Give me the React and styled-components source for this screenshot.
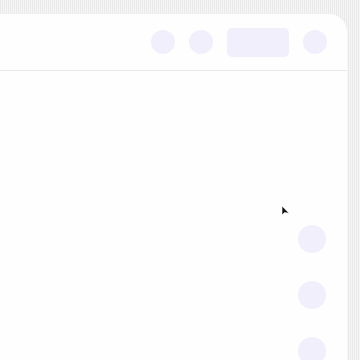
import React from "react";
import styled, { createGlobalStyle } from "styled-components";

const Global = createGlobalStyle`
  html, body {
    margin: 0;
    padding: 0;
    height: 360px;
    overflow: hidden;
    font-family: "Liberation Sans", Arial, sans-serif;
    background: repeating-linear-gradient(90deg, #e9e9e9 0px, #e9e9e9 1px, #f6f6f6 1px, #f6f6f6 2px);
  }
`;

const Page = styled.div`
  padding-top: 14px;
`;

const Panel = styled.div`
  width: 347px;
  height: 346px;
  background: #fefefe;
  border-top-right-radius: 18px;
  display: flex;
  flex-direction: column;
  overflow: hidden;
`;

const Header = styled.div`
  height: 56px;
  flex-shrink: 0;
  border-bottom: 1px solid #e8e8e8;
  display: flex;
  align-items: center;
  justify-content: flex-end;
  gap: 14px;
  padding-right: 20px;
`;

const Dot = styled.div`
  width: ${(p) => p.size}px;
  height: ${(p) => p.size}px;
  border-radius: 50%;
  background: #f1effc;
  flex-shrink: 0;
`;

const Pill = styled.div`
  width: 62px;
  height: 29px;
  border-radius: 5px;
  background: #f1effc;
`;

const Body = styled.div`
  position: relative;
  flex: 1;
  display: flex;
  flex-direction: column;
  align-items: flex-end;
  padding: 154px 21px 0 0;
  gap: 28px;
`;

const Cursor = styled.svg`
  position: absolute;
  left: 281px;
  top: 134px;
`;

export default function App() {
  return (
    <Page>
      <Global />
      <Panel>
        <Header>
          <Dot size={24} />
          <Dot size={24} />
          <Pill />
          <Dot size={24} />
        </Header>
        <Body>
          <Cursor width="10" height="12" viewBox="0 0 10 12">
            <path d="M1 1 L1 10 L3.5 7.6 L8 8.2 Z" fill="#111" stroke="#fff" strokeWidth="0.6" />
          </Cursor>
          <Dot size={28} />
          <Dot size={28} />
          <Dot size={28} />
        </Body>
      </Panel>
    </Page>
  );
}
